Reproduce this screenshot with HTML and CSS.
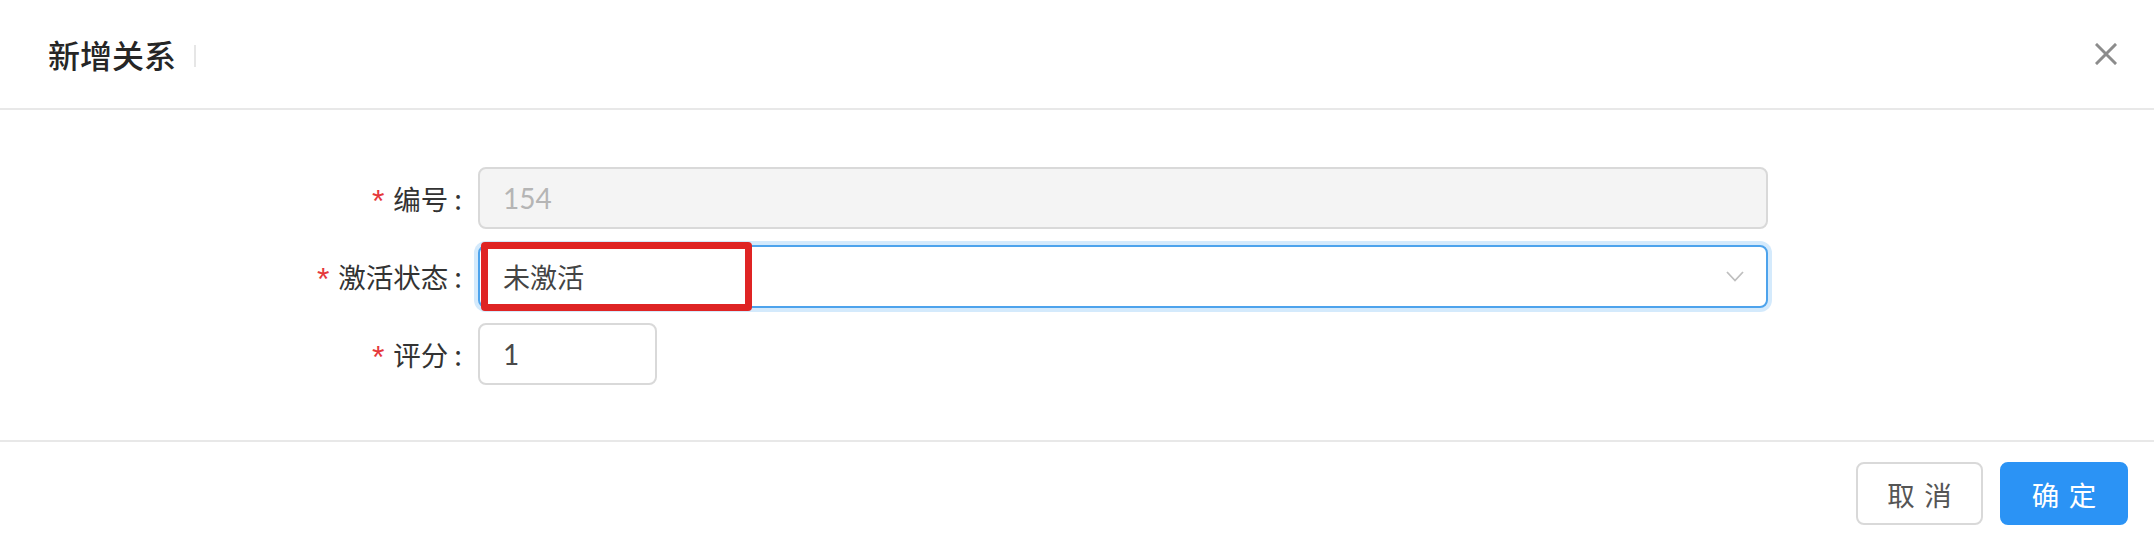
FILE: index.html
```html
<!DOCTYPE html>
<html lang="zh-CN">
<head>
<meta charset="utf-8">
<title>新增关系</title>
<link rel="stylesheet" href="styles.css">
</head>
<body>
<div class="modal">
  <div class="modal-header">
    <span class="modal-title">新增关系</span>
    <span class="title-sep"></span>
    <button class="modal-close" aria-label="关闭">
      <svg width="22" height="22" viewBox="0 0 22 22"><path d="M2 2 L20 20 M20 2 L2 20" stroke="#8c8c8c" stroke-width="3" fill="none" stroke-linecap="square"/></svg>
    </button>
  </div>
  <div class="modal-body">
    <div class="form-item">
      <label class="form-label"><span class="req">*</span>编号<span class="colon">:</span></label>
      <div class="control">
        <div class="input input-disabled wide">154</div>
      </div>
    </div>
    <div class="form-item">
      <label class="form-label"><span class="req">*</span>激活状态<span class="colon">:</span></label>
      <div class="control">
        <div class="select wide">
          <span class="select-value">未激活</span>
          <svg class="chevron" width="18" height="11" viewBox="0 0 18 11"><path d="M1 1 L9 9.5 L17 1" stroke="#bfbfbf" stroke-width="1.8" fill="none"/></svg>
          <div class="highlight"></div>
        </div>
      </div>
    </div>
    <div class="form-item">
      <label class="form-label"><span class="req">*</span>评分<span class="colon">:</span></label>
      <div class="control">
        <div class="input narrow">1</div>
      </div>
    </div>
  </div>
  <div class="modal-footer">
    <button class="btn btn-default">取消</button>
    <button class="btn btn-primary">确定</button>
  </div>
</div>
</body>
</html>
```

FILE: styles.css
```css
* { box-sizing: border-box; }
html, body {
  margin: 0;
  padding: 0;
  background: #ffffff;
}
body {
  font-family: "Lato", "Noto Sans CJK SC", sans-serif;
  color: #333;
}
.modal {
  width: 2154px;
  height: 546px;
  display: flex;
  flex-direction: column;
  background: #fff;
}
.modal-header {
  height: 110px;
  border-bottom: 2px solid #e8e8e8;
  display: flex;
  align-items: center;
  padding: 0 37px 0 48px;
}
.modal-title {
  font-family: "Noto Sans CJK SC", sans-serif;
  font-size: 32px;
  font-weight: 500;
  color: #262626;
  line-height: 40px;
}
.title-sep {
  width: 2px;
  height: 22px;
  background: #e6e6e6;
  margin-left: 18px;
  margin-top: 4px;
}
.modal-close {
  margin-left: auto;
  border: none;
  background: transparent;
  padding: 0;
  width: 22px;
  height: 22px;
  display: flex;
  align-items: center;
  justify-content: center;
}
.modal-body {
  flex: 1;
  padding-top: 57px;
  display: flex;
  flex-direction: column;
  gap: 16px;
}
.form-item {
  display: flex;
  align-items: center;
  height: 62px;
}
.form-label {
  width: 478px;
  padding-right: 16px;
  text-align: right;
  font-family: "Noto Sans CJK SC", sans-serif;
  font-size: 27.5px;
  color: #333;
  white-space: nowrap;
  display: flex;
  justify-content: flex-end;
  align-items: center;
}
.req {
  color: #e5383b;
  font-family: "Liberation Sans", sans-serif;
  font-size: 32px;
  margin-right: 9px;
  position: relative;
  top: 3px;
}
.colon {
  margin-left: 6px;
}
.control {
  display: flex;
}
.input, .select {
  height: 62px;
  border: 2px solid #d9d9d9;
  border-radius: 8px;
  padding: 0 23px;
  display: flex;
  align-items: center;
  font-size: 28px;
  color: #4a4a4a;
  background: #fff;
}
.wide { width: 1290px; }
.narrow { width: 179px; }
.input-disabled {
  background: #f4f4f4;
  color: #b5b5b5;
}
.select {
  position: relative;
  height: 63px;
  padding-right: 22px;
  border-color: #4da3ec;
  box-shadow: 0 0 0 4px #d4eafc;
  font-family: "Noto Sans CJK SC", sans-serif;
}
.select-value {
  font-size: 27px;
  color: #444;
}
.chevron {
  margin-left: auto;
}
.highlight {
  position: absolute;
  left: 1px;
  top: -5px;
  width: 271px;
  height: 69px;
  border: 7px solid #df2424;
  border-radius: 4px;
}
.modal-footer {
  height: 106px;
  border-top: 2px solid #e8e8e8;
  display: flex;
  justify-content: flex-end;
  align-items: flex-start;
  padding: 20px 26px 0 0;
  gap: 17px;
}
.btn {
  height: 63px;
  width: 127px;
  border-radius: 8px;
  font-family: "Noto Sans CJK SC", sans-serif;
  font-size: 27.5px;
  letter-spacing: 0.34em;
  text-indent: 0.34em;
  display: flex;
  align-items: center;
  justify-content: center;
  cursor: pointer;
}
.btn-default {
  background: #fff;
  border: 2px solid #d9d9d9;
  color: #555;
}
.btn-primary {
  background: #2b93f5;
  border: 2px solid #2b93f5;
  color: #fff;
  width: 128px;
}
```
